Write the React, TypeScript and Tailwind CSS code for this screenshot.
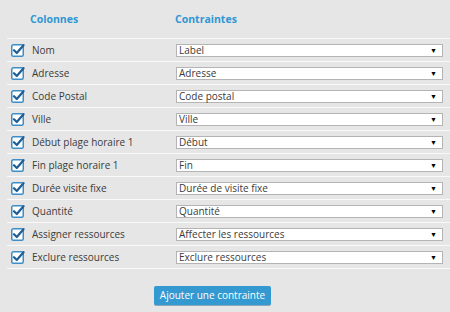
import React from "react";

const rows: [string, string][] = [
  ["Nom", "Label"],
  ["Adresse", "Adresse"],
  ["Code Postal", "Code postal"],
  ["Ville", "Ville"],
  ["Début plage horaire 1", "Début"],
  ["Fin plage horaire 1", "Fin"],
  ["Durée visite fixe", "Durée de visite fixe"],
  ["Quantité", "Quantité"],
  ["Assigner ressources", "Affecter les ressources"],
  ["Exclure ressources", "Exclure ressources"],
];

function Check() {
  return (
    <svg width="14" height="14" viewBox="0 0 14 14" className="shrink-0">
      <rect x="0.75" y="1.75" width="11.5" height="11.5" rx="1.5" fill="#ffffff" stroke="#3d8ec6" strokeWidth="1.5" />
      <path d="M3 7.2 L5.8 10 L12.5 2.2" fill="none" stroke="#1f5f96" strokeWidth="2.2" strokeLinecap="round" strokeLinejoin="round" />
    </svg>
  );
}

export default function App() {
  return (
    <div
      className="w-[450px] h-[312px] bg-[#e6e6e6] pl-[7px] overflow-hidden"
      style={{ fontFamily: '"Open Sans", "Liberation Sans", sans-serif' }}
    >
      <div className="h-[38px] flex items-center text-[10.5px] font-bold text-[#2f97d4] pt-[2px]">
        <div className="w-[168px] pl-[23px]">Colonnes</div>
        <div>Contraintes</div>
      </div>
      {rows.map(([label, value]) => (
        <div key={label} className="h-[23px] border-t border-[#fafafa] flex items-center text-[10px] text-[#3b3b3b]">
          <div className="w-[169px] flex items-center pl-[4px]">
            <Check />
            <span className="ml-[7px]">{label}</span>
          </div>
          <div className="w-[267px] h-[13px] bg-white border border-[#b4b4b4] flex items-center justify-between pl-[2px] pr-[5px] leading-none text-[10px]">
            <span>{value}</span>
            <span className="text-[7px] text-black">▼</span>
          </div>
        </div>
      ))}
      <div className="border-t border-[#fafafa]" />
      <div className="pt-[17px] pl-[147px]">
        <button className="h-[19px] w-[117px] bg-[#3399d0] text-white text-[10px] rounded-[2px] flex items-center justify-center shadow-[0_1px_0_#8aa8bb]">
          Ajouter une contrainte
        </button>
      </div>
    </div>
  );
}
